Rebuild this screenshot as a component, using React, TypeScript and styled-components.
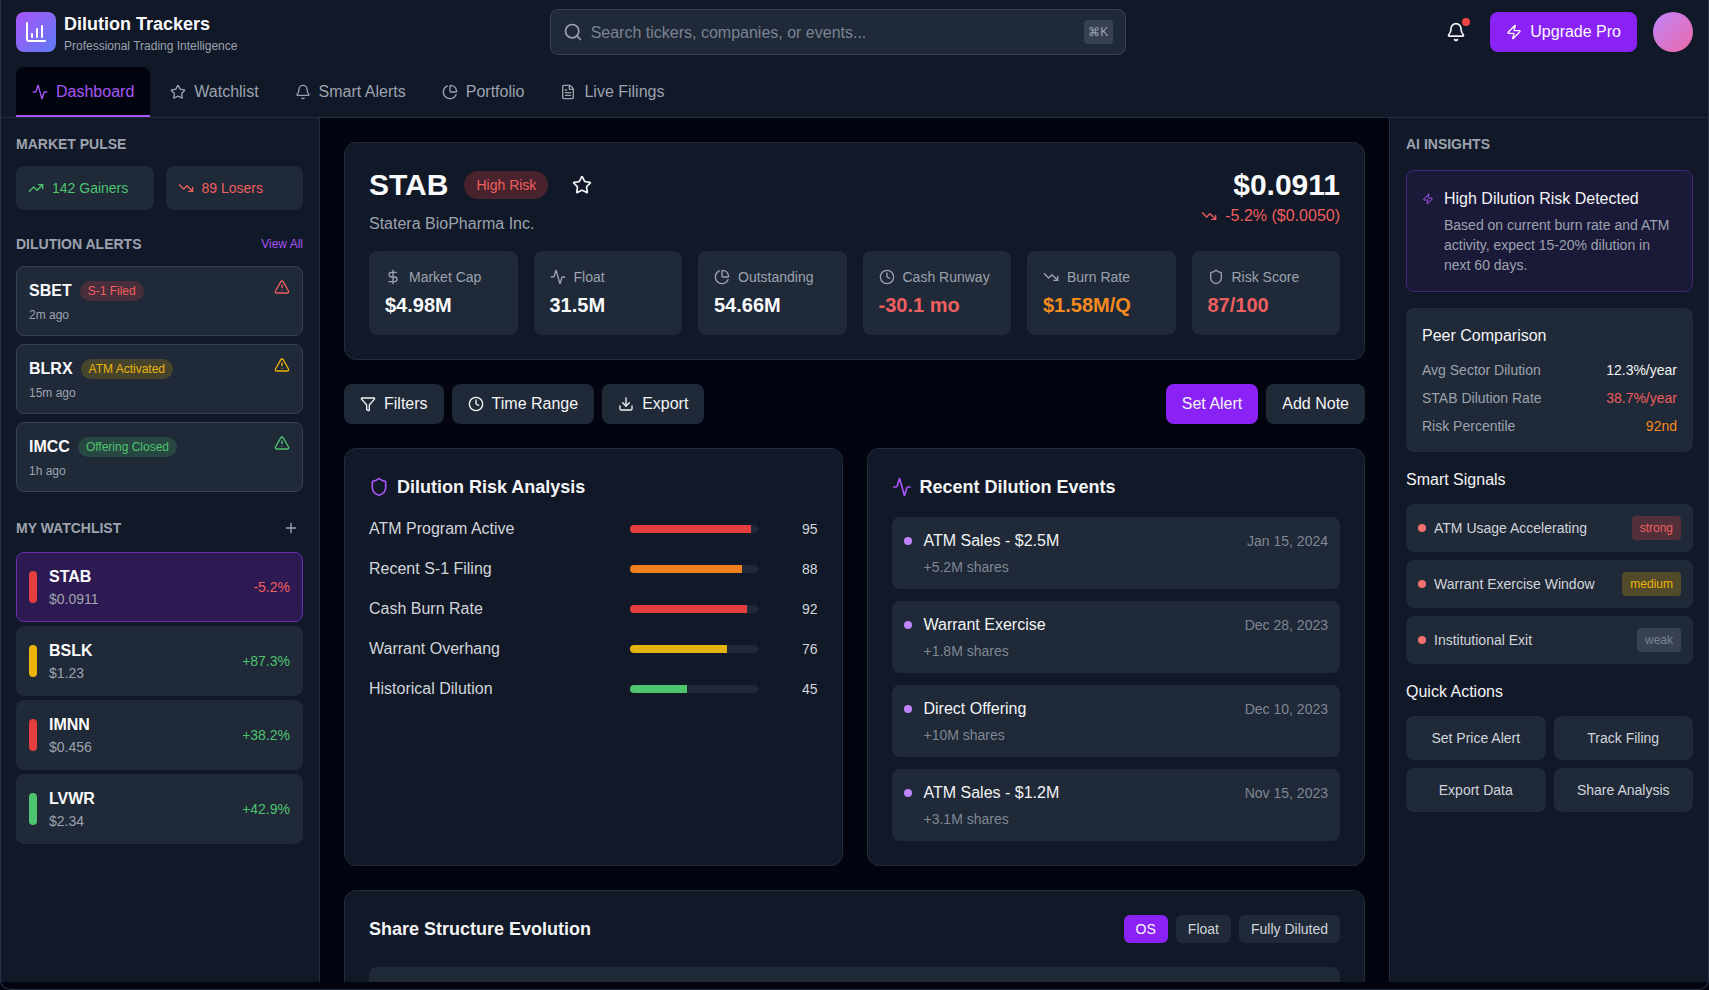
import React from "react";
import styled, { createGlobalStyle } from "styled-components";
import {
  Activity, Star, Bell, PieChart, FileText, TrendingUp, TrendingDown, AlertTriangle, Plus,
  DollarSign, Clock, Shield, Filter, Download, Zap, Search,
} from "lucide-react";

const RED = "#ee5f5f";
const GREEN = "#4ec46e";
const YELLOW = "#eab308";
const ORANGE = "#f58a1f";
const PURPLE = "#a855f7";
const BRAND = "#8b22f5";
const PANEL = "#111827";
const CARD = "#1f2937";
const LINE = "#222c3b";
const MUTED = "#9ca3af";
const INK = "#02050f";

const Global = createGlobalStyle`
  html, body { margin: 0; padding: 0; height: 100%; background: ${INK}; overflow: hidden; }
  * { box-sizing: border-box; }
  body { font-family: "Liberation Sans", Arial, sans-serif; color: #f3f4f6; }
  button { font-family: inherit; }
`;

const Frame = styled.div`
  position: relative;
  width: 1709px;
  height: 990px;
  display: flex;
  flex-direction: column;
  padding-bottom: 8px;
  background: ${INK};
  overflow: hidden;
  &::after {
    content: "";
    position: absolute;
    inset: 0;
    border: 1px solid #2c3543;
    border-top: 0;
    border-radius: 0 0 10px 10px;
    pointer-events: none;
  }
`;

const Header = styled.header`
  flex: none;
  height: 118px;
  background: ${PANEL};
  border-bottom: 1px solid ${LINE};
`;
const TopRow = styled.div`
  height: 64px;
  padding: 0 16px;
  display: flex;
  align-items: center;
  justify-content: space-between;
`;
const Brand = styled.div`
  display: flex;
  align-items: center;
  gap: 8px;
  width: 225px;
`;
const LogoBox = styled.div`
  width: 40px;
  height: 40px;
  border-radius: 8px;
  background: linear-gradient(135deg, #a855f7, #5f7cf6);
  display: flex;
  align-items: center;
  justify-content: center;
`;
const BrandTitle = styled.div`
  font-size: 18px;
  line-height: 28px;
  font-weight: 700;
  color: #f9fafb;
`;
const BrandSub = styled.div`
  font-size: 12px;
  line-height: 16px;
  color: ${MUTED};
`;
const SearchBox = styled.div`
  width: 576px;
  height: 46px;
  margin-left: -4px;
  padding: 0 12px 0 12px;
  display: flex;
  align-items: center;
  gap: 8px;
  background: ${CARD};
  border: 1px solid #374151;
  border-radius: 8px;
  color: ${MUTED};
`;
const SearchText = styled.span`
  flex: 1;
  padding-top: 1px;
  font-size: 16px;
  color: #7b8494;
`;
const Kbd = styled.span`
  width: 29px;
  height: 24px;
  border-radius: 4px;
  background: #374151;
  color: ${MUTED};
  font-size: 12px;
  display: flex;
  align-items: center;
  justify-content: center;
`;
const HeaderRight = styled.div`
  display: flex;
  align-items: center;
  gap: 16px;
`;
const BellButton = styled.div`
  position: relative;
  width: 36px;
  height: 36px;
  display: flex;
  align-items: center;
  justify-content: center;
  color: #f3f4f6;
`;
const BellDot = styled.span`
  position: absolute;
  top: 4px;
  right: 4px;
  width: 8px;
  height: 8px;
  border-radius: 50%;
  background: #ef4444;
`;
const UpgradeButton = styled.button`
  height: 40px;
  padding: 0 16px;
  display: flex;
  align-items: center;
  gap: 8px;
  border: 0;
  border-radius: 8px;
  background: ${BRAND};
  color: #f9fafb;
  font-size: 16px;
`;
const Avatar = styled.div`
  width: 40px;
  height: 40px;
  border-radius: 50%;
  background: linear-gradient(135deg, #c084fc, #ec6aa8);
`;
const Nav = styled.nav`
  height: 53px;
  padding: 3px 16px 0;
  display: flex;
  gap: 4px;
`;
const Tab = styled.div<{ $active?: boolean }>`
  height: 50px;
  padding: 2px 16px 0;
  display: flex;
  align-items: center;
  gap: 8px;
  font-size: 16px;
  border-radius: 8px 8px 0 0;
  color: ${(p) => (p.$active ? PURPLE : MUTED)};
  background: ${(p) => (p.$active ? INK : "transparent")};
  border-bottom: 2px solid ${(p) => (p.$active ? PURPLE : "transparent")};
`;

const Body = styled.div`
  flex: 1;
  min-height: 0;
  display: flex;
`;
const LeftBar = styled.aside`
  flex: none;
  width: 320px;
  padding: 16px;
  background: ${PANEL};
  border-right: 1px solid ${LINE};
`;
const RightBar = styled.aside`
  flex: none;
  width: 320px;
  padding: 16px;
  background: ${PANEL};
  border-left: 1px solid ${LINE};
`;
const Main = styled.main`
  flex: 1;
  min-width: 0;
  padding: 24px;
  overflow: hidden;
`;
const SectionLabel = styled.div`
  font-size: 14px;
  line-height: 20px;
  font-weight: 700;
  color: ${MUTED};
  text-transform: uppercase;
`;
const LabelRow = styled.div<{ $mb: number }>`
  display: flex;
  align-items: center;
  justify-content: space-between;
  margin-bottom: ${(p) => p.$mb}px;
`;
const ViewAll = styled.span`
  font-size: 12px;
  color: ${PURPLE};
`;
const AddButton = styled.div`
  width: 24px;
  height: 24px;
  display: flex;
  align-items: center;
  justify-content: center;
  color: ${MUTED};
`;
const PulseGrid = styled.div`
  display: grid;
  grid-template-columns: 1fr 1fr;
  gap: 12px;
  margin: 12px 0 24px;
`;
const PulseCard = styled.div<{ $color: string }>`
  height: 44px;
  padding: 0 12px;
  display: flex;
  align-items: center;
  gap: 8px;
  border-radius: 8px;
  background: ${CARD};
  color: ${(p) => p.$color};
  font-size: 14px;
`;
const AlertList = styled.div`
  display: flex;
  flex-direction: column;
  gap: 8px;
  margin-bottom: 24px;
`;
const AlertCard = styled.div`
  height: 70px;
  padding: 12px;
  display: flex;
  justify-content: space-between;
  align-items: flex-start;
  border: 1px solid #374151;
  border-radius: 8px;
  background: ${CARD};
`;
const AlertHead = styled.div`
  display: flex;
  align-items: center;
  gap: 8px;
  height: 24px;
`;
const Ticker = styled.span`
  font-size: 16px;
  line-height: 24px;
  font-weight: 700;
  color: #f9fafb;
`;
const AlertBadge = styled.span<{ $color: string; $bg: string }>`
  height: 20px;
  padding: 0 8px;
  display: flex;
  align-items: center;
  border-radius: 10px;
  font-size: 12px;
  color: ${(p) => p.$color};
  background: ${(p) => p.$bg};
`;
const Time = styled.div`
  margin-top: 4px;
  font-size: 12px;
  line-height: 16px;
  color: ${MUTED};
`;
const WatchList = styled.div`
  display: flex;
  flex-direction: column;
  gap: 4px;
`;
const WatchItem = styled.div<{ $active?: boolean }>`
  height: 70px;
  padding: 0 12px;
  display: flex;
  align-items: center;
  gap: 12px;
  border-radius: 8px;
  border: 1px solid ${(p) => (p.$active ? "#6b2fb0" : CARD)};
  background: ${(p) => (p.$active ? "#2e1a52" : CARD)};
`;
const WatchBar = styled.span<{ $color: string }>`
  flex: none;
  width: 8px;
  height: 32px;
  border-radius: 4px;
  background: ${(p) => p.$color};
`;
const WatchText = styled.div`
  flex: 1;
`;
const WatchPrice = styled.div`
  font-size: 14px;
  line-height: 20px;
  color: ${MUTED};
`;
const WatchChange = styled.span<{ $color: string }>`
  font-size: 14px;
  color: ${(p) => p.$color};
`;

const Hero = styled.section`
  height: 218px;
  padding: 24px;
  border: 1px solid ${LINE};
  border-radius: 12px;
  background: ${PANEL};
`;
const HeroTop = styled.div`
  display: flex;
  justify-content: space-between;
  align-items: flex-start;
  height: 68px;
`;
const HeroName = styled.div`
  display: flex;
  align-items: center;
  gap: 16px;
  height: 36px;
`;
const HeroTicker = styled.h1`
  margin: 0;
  font-size: 30px;
  line-height: 36px;
  font-weight: 700;
  color: #f9fafb;
`;
const RiskPill = styled.span`
  height: 28px;
  padding: 0 12px;
  display: flex;
  align-items: center;
  border-radius: 14px;
  font-size: 14px;
  color: ${RED};
  background: rgba(239, 68, 68, 0.25);
`;
const StarIcon = styled.span`
  display: flex;
  margin-left: 8px;
  color: #f3f4f6;
`;
const Company = styled.div`
  margin-top: 9px;
  font-size: 16px;
  line-height: 24px;
  color: ${MUTED};
`;
const PriceBlock = styled.div`
  display: flex;
  flex-direction: column;
  align-items: flex-end;
`;
const Price = styled.div`
  font-size: 30px;
  line-height: 36px;
  font-weight: 700;
  color: #f9fafb;
`;
const PriceChange = styled.div`
  display: flex;
  align-items: center;
  gap: 8px;
  margin-top: 1px;
  font-size: 16px;
  line-height: 24px;
  color: ${RED};
`;
const StatGrid = styled.div`
  margin-top: 16px;
  display: grid;
  grid-template-columns: repeat(6, 1fr);
  gap: 16px;
`;
const StatCard = styled.div`
  height: 84px;
  padding: 16px;
  border-radius: 8px;
  background: ${CARD};
`;
const StatLabel = styled.div`
  display: flex;
  align-items: center;
  gap: 8px;
  font-size: 14px;
  line-height: 20px;
  color: ${MUTED};
`;
const StatValue = styled.div<{ $color?: string }>`
  margin-top: 4px;
  font-size: 20px;
  line-height: 28px;
  font-weight: 700;
  color: ${(p) => p.$color || "#f9fafb"};
`;
const ActionRow = styled.div`
  margin: 24px 0;
  display: flex;
  justify-content: space-between;
`;
const ActionGroup = styled.div`
  display: flex;
  gap: 8px;
`;
const ActionButton = styled.button<{ $primary?: boolean }>`
  height: 40px;
  padding: 0 16px;
  display: flex;
  align-items: center;
  gap: 8px;
  border: 0;
  border-radius: 8px;
  font-size: 16px;
  color: #f3f4f6;
  background: ${(p) => (p.$primary ? BRAND : CARD)};
`;
const TwoCols = styled.div`
  display: grid;
  grid-template-columns: 1fr 1fr;
  gap: 24px;
  margin-bottom: 24px;
`;
const Panel = styled.section`
  padding: 24px;
  border: 1px solid ${LINE};
  border-radius: 12px;
  background: ${PANEL};
`;
const PanelTitle = styled.h2`
  margin: 0 0 16px;
  display: flex;
  align-items: center;
  gap: 8px;
  font-size: 18px;
  line-height: 28px;
  font-weight: 700;
  color: #f3f4f6;
  svg { color: ${PURPLE}; flex: none; }
`;
const RiskList = styled.div`
  display: flex;
  flex-direction: column;
  gap: 16px;
`;
const RiskRow = styled.div`
  display: flex;
  align-items: center;
  height: 24px;
`;
const RiskLabel = styled.span`
  flex: 1;
  font-size: 16px;
  color: #d1d5db;
`;
const Track = styled.div`
  width: 128px;
  height: 8px;
  border-radius: 4px;
  background: ${CARD};
  overflow: hidden;
`;
const Fill = styled.div<{ $color: string }>`
  height: 100%;
  background: ${(p) => p.$color};
`;
const RiskValue = styled.span`
  width: 60px;
  text-align: right;
  font-size: 14px;
  color: #d1d5db;
`;
const EventList = styled.div`
  display: flex;
  flex-direction: column;
  gap: 12px;
`;
const EventCard = styled.div`
  height: 72px;
  padding: 12px;
  display: flex;
  gap: 12px;
  border-radius: 8px;
  background: ${CARD};
`;
const EventDot = styled.span`
  flex: none;
  width: 8px;
  height: 8px;
  margin-top: 8px;
  border-radius: 50%;
  background: #c084fc;
`;
const EventText = styled.div`
  flex: 1;
`;
const EventTitle = styled.div`
  font-size: 16px;
  line-height: 24px;
  color: #f3f4f6;
`;
const EventSub = styled.div`
  margin-top: 4px;
  font-size: 14px;
  line-height: 20px;
  color: #7f8794;
`;
const EventDate = styled.span`
  font-size: 14px;
  line-height: 24px;
  color: #7f8794;
`;
const ChartHead = styled.div`
  display: flex;
  align-items: center;
  justify-content: space-between;
  height: 28px;
  margin-bottom: 24px;
`;
const ChartTitle = styled.h2`
  margin: 0;
  font-size: 18px;
  line-height: 28px;
  font-weight: 700;
  color: #f3f4f6;
`;
const ChartToggles = styled.div`
  display: flex;
  gap: 8px;
`;
const Toggle = styled.button<{ $active?: boolean }>`
  height: 28px;
  padding: 0 12px;
  border: 0;
  border-radius: 6px;
  font-size: 14px;
  color: ${(p) => (p.$active ? "#f9fafb" : "#d1d5db")};
  background: ${(p) => (p.$active ? BRAND : CARD)};
`;
const ChartArea = styled.div`
  height: 256px;
  border-radius: 8px;
  background: ${CARD};
`;

const InsightCard = styled.div`
  height: 122px;
  margin: 16px 0;
  padding: 16px;
  display: flex;
  gap: 9px;
  border: 1px solid #41277a;
  border-radius: 8px;
  background: #1a1938;
`;
const InsightIcon = styled.span`
  flex: none;
  display: flex;
  height: 24px;
  align-items: center;
  margin-left: -1px;
  color: ${PURPLE};
`;
const InsightBody = styled.div`
  margin-left: 1px;
`;
const InsightTitle = styled.div`
  font-size: 16px;
  line-height: 24px;
  color: #f3f4f6;
`;
const InsightText = styled.div`
  margin-top: 4px;
  font-size: 14px;
  line-height: 20px;
  color: ${MUTED};
`;
const PeerCard = styled.div`
  padding: 16px;
  border-radius: 8px;
  background: ${CARD};
  margin-bottom: 16px;
`;
const SubTitle = styled.div`
  margin-bottom: 12px;
  font-size: 16px;
  line-height: 24px;
  color: #f3f4f6;
`;
const PeerRows = styled.div`
  display: flex;
  flex-direction: column;
  gap: 8px;
`;
const PeerRow = styled.div`
  display: flex;
  justify-content: space-between;
  font-size: 14px;
  line-height: 20px;
  color: ${MUTED};
`;
const PeerValue = styled.span<{ $color: string }>`
  color: ${(p) => p.$color};
`;
const SignalList = styled.div`
  display: flex;
  flex-direction: column;
  gap: 8px;
  margin-bottom: 16px;
`;
const SignalRow = styled.div`
  height: 48px;
  padding: 0 12px;
  display: flex;
  align-items: center;
  gap: 8px;
  border-radius: 8px;
  background: ${CARD};
`;
const SignalDot = styled.span`
  flex: none;
  width: 8px;
  height: 8px;
  border-radius: 50%;
  background: #f87171;
`;
const SignalText = styled.span`
  flex: 1;
  font-size: 14px;
  color: #d1d5db;
`;
const SignalBadge = styled.span<{ $color: string; $bg: string }>`
  height: 24px;
  padding: 0 8px;
  display: flex;
  align-items: center;
  border-radius: 4px;
  font-size: 12px;
  color: ${(p) => p.$color};
  background: ${(p) => p.$bg};
`;
const QuickGrid = styled.div`
  display: grid;
  grid-template-columns: 1fr 1fr;
  gap: 8px;
`;
const QuickButton = styled.button`
  height: 44px;
  border: 0;
  border-radius: 8px;
  background: ${CARD};
  color: #d1d5db;
  font-size: 14px;
`;

const tabs = [
  { label: "Dashboard", Icon: Activity, active: true },
  { label: "Watchlist", Icon: Star },
  { label: "Smart Alerts", Icon: Bell },
  { label: "Portfolio", Icon: PieChart },
  { label: "Live Filings", Icon: FileText },
];
const alerts = [
  { t: "SBET", b: "S-1 Filed", c: RED, bg: "rgba(239,68,68,0.2)", time: "2m ago" },
  { t: "BLRX", b: "ATM Activated", c: YELLOW, bg: "rgba(234,179,8,0.2)", time: "15m ago" },
  { t: "IMCC", b: "Offering Closed", c: GREEN, bg: "rgba(78,196,110,0.2)", time: "1h ago" },
];
const watch = [
  { t: "STAB", p: "$0.0911", ch: "-5.2%", bar: "#e53e3e", col: RED, active: true },
  { t: "BSLK", p: "$1.23", ch: "+87.3%", bar: "#eab308", col: GREEN },
  { t: "IMNN", p: "$0.456", ch: "+38.2%", bar: "#e53e3e", col: GREEN },
  { t: "LVWR", p: "$2.34", ch: "+42.9%", bar: "#4ec46e", col: GREEN },
];
const stats = [
  { l: "Market Cap", v: "$4.98M", Icon: DollarSign },
  { l: "Float", v: "31.5M", Icon: Activity },
  { l: "Outstanding", v: "54.66M", Icon: PieChart },
  { l: "Cash Runway", v: "-30.1 mo", Icon: Clock, c: RED },
  { l: "Burn Rate", v: "$1.58M/Q", Icon: TrendingDown, c: ORANGE },
  { l: "Risk Score", v: "87/100", Icon: Shield, c: RED },
];
const risks = [
  { l: "ATM Program Active", v: 95, c: "#e53e3e" },
  { l: "Recent S-1 Filing", v: 88, c: "#f07f1e" },
  { l: "Cash Burn Rate", v: 92, c: "#e53e3e" },
  { l: "Warrant Overhang", v: 76, c: "#e6b20f" },
  { l: "Historical Dilution", v: 45, c: "#4ec46e" },
];
const events = [
  { t: "ATM Sales - $2.5M", s: "+5.2M shares", d: "Jan 15, 2024" },
  { t: "Warrant Exercise", s: "+1.8M shares", d: "Dec 28, 2023" },
  { t: "Direct Offering", s: "+10M shares", d: "Dec 10, 2023" },
  { t: "ATM Sales - $1.2M", s: "+3.1M shares", d: "Nov 15, 2023" },
];
const peers = [
  { l: "Avg Sector Dilution", v: "12.3%/year", c: "#f3f4f6" },
  { l: "STAB Dilution Rate", v: "38.7%/year", c: RED },
  { l: "Risk Percentile", v: "92nd", c: ORANGE },
];
const signals = [
  { l: "ATM Usage Accelerating", b: "strong", c: RED, bg: "rgba(239,68,68,0.25)" },
  { l: "Warrant Exercise Window", b: "medium", c: YELLOW, bg: "rgba(234,179,8,0.25)" },
  { l: "Institutional Exit", b: "weak", c: "#7b8494", bg: "#374151" },
];
const quick = ["Set Price Alert", "Track Filing", "Export Data", "Share Analysis"];

function LogoGlyph() {
  return (
    <svg width="24" height="24" viewBox="0 0 24 24" fill="none" stroke="#fff" strokeWidth="2" strokeLinecap="round" strokeLinejoin="round">
      <path d="M3 3v16a2 2 0 0 0 2 2h16" />
      <path d="M8 17v-3" />
      <path d="M13 17V9" />
      <path d="M18 17V6" />
    </svg>
  );
}

export default function App() {
  return (
    <Frame>
      <Global />
      <Header>
        <TopRow>
          <Brand>
            <LogoBox><LogoGlyph /></LogoBox>
            <div>
              <BrandTitle>Dilution Trackers</BrandTitle>
              <BrandSub>Professional Trading Intelligence</BrandSub>
            </div>
          </Brand>
          <SearchBox>
            <Search size={20} />
            <SearchText>Search tickers, companies, or events...</SearchText>
            <Kbd>⌘K</Kbd>
          </SearchBox>
          <HeaderRight>
            <BellButton>
              <Bell size={20} />
              <BellDot />
            </BellButton>
            <UpgradeButton><Zap size={16} />Upgrade Pro</UpgradeButton>
            <Avatar />
          </HeaderRight>
        </TopRow>
        <Nav>
          {tabs.map(({ label, Icon, active }) => (
            <Tab key={label} $active={active}><Icon size={16} />{label}</Tab>
          ))}
        </Nav>
      </Header>
      <Body>
        <LeftBar>
          <SectionLabel>Market Pulse</SectionLabel>
          <PulseGrid>
            <PulseCard $color={GREEN}><TrendingUp size={16} />142 Gainers</PulseCard>
            <PulseCard $color={RED}><TrendingDown size={16} />89 Losers</PulseCard>
          </PulseGrid>
          <LabelRow $mb={12}>
            <SectionLabel>Dilution Alerts</SectionLabel>
            <ViewAll>View All</ViewAll>
          </LabelRow>
          <AlertList>
            {alerts.map((a) => (
              <AlertCard key={a.t}>
                <div>
                  <AlertHead>
                    <Ticker>{a.t}</Ticker>
                    <AlertBadge $color={a.c} $bg={a.bg}>{a.b}</AlertBadge>
                  </AlertHead>
                  <Time>{a.time}</Time>
                </div>
                <AlertTriangle size={16} color={a.c} />
              </AlertCard>
            ))}
          </AlertList>
          <LabelRow $mb={12}>
            <SectionLabel>My Watchlist</SectionLabel>
            <AddButton><Plus size={16} /></AddButton>
          </LabelRow>
          <WatchList>
            {watch.map((w) => (
              <WatchItem key={w.t} $active={w.active}>
                <WatchBar $color={w.bar} />
                <WatchText>
                  <Ticker>{w.t}</Ticker>
                  <WatchPrice>{w.p}</WatchPrice>
                </WatchText>
                <WatchChange $color={w.col}>{w.ch}</WatchChange>
              </WatchItem>
            ))}
          </WatchList>
        </LeftBar>
        <Main>
          <Hero>
            <HeroTop>
              <div>
                <HeroName>
                  <HeroTicker>STAB</HeroTicker>
                  <RiskPill>High Risk</RiskPill>
                  <StarIcon><Star size={20} /></StarIcon>
                </HeroName>
                <Company>Statera BioPharma Inc.</Company>
              </div>
              <PriceBlock>
                <Price>$0.0911</Price>
                <PriceChange><TrendingDown size={16} />-5.2% ($0.0050)</PriceChange>
              </PriceBlock>
            </HeroTop>
            <StatGrid>
              {stats.map(({ l, v, Icon, c }) => (
                <StatCard key={l}>
                  <StatLabel><Icon size={16} />{l}</StatLabel>
                  <StatValue $color={c}>{v}</StatValue>
                </StatCard>
              ))}
            </StatGrid>
          </Hero>
          <ActionRow>
            <ActionGroup>
              <ActionButton><Filter size={16} />Filters</ActionButton>
              <ActionButton><Clock size={16} />Time Range</ActionButton>
              <ActionButton><Download size={16} />Export</ActionButton>
            </ActionGroup>
            <ActionGroup>
              <ActionButton $primary>Set Alert</ActionButton>
              <ActionButton>Add Note</ActionButton>
            </ActionGroup>
          </ActionRow>
          <TwoCols>
            <Panel>
              <PanelTitle><Shield size={20} />Dilution Risk Analysis</PanelTitle>
              <RiskList>
                {risks.map((r) => (
                  <RiskRow key={r.l}>
                    <RiskLabel>{r.l}</RiskLabel>
                    <Track><Fill $color={r.c} style={{ width: `${r.v}%` }} /></Track>
                    <RiskValue>{r.v}</RiskValue>
                  </RiskRow>
                ))}
              </RiskList>
            </Panel>
            <Panel>
              <PanelTitle><Activity size={20} />Recent Dilution Events</PanelTitle>
              <EventList>
                {events.map((e) => (
                  <EventCard key={e.t}>
                    <EventDot />
                    <EventText>
                      <EventTitle>{e.t}</EventTitle>
                      <EventSub>{e.s}</EventSub>
                    </EventText>
                    <EventDate>{e.d}</EventDate>
                  </EventCard>
                ))}
              </EventList>
            </Panel>
          </TwoCols>
          <Panel>
            <ChartHead>
              <ChartTitle>Share Structure Evolution</ChartTitle>
              <ChartToggles>
                <Toggle $active>OS</Toggle>
                <Toggle>Float</Toggle>
                <Toggle>Fully Diluted</Toggle>
              </ChartToggles>
            </ChartHead>
            <ChartArea />
          </Panel>
        </Main>
        <RightBar>
          <SectionLabel>AI Insights</SectionLabel>
          <InsightCard>
            <InsightIcon><Zap size={12} /></InsightIcon>
            <InsightBody>
              <InsightTitle>High Dilution Risk Detected</InsightTitle>
              <InsightText>Based on current burn rate and ATM activity, expect 15-20% dilution in next 60 days.</InsightText>
            </InsightBody>
          </InsightCard>
          <PeerCard>
            <SubTitle>Peer Comparison</SubTitle>
            <PeerRows>
              {peers.map((p) => (
                <PeerRow key={p.l}>
                  <span>{p.l}</span>
                  <PeerValue $color={p.c}>{p.v}</PeerValue>
                </PeerRow>
              ))}
            </PeerRows>
          </PeerCard>
          <SubTitle>Smart Signals</SubTitle>
          <SignalList>
            {signals.map((s) => (
              <SignalRow key={s.l}>
                <SignalDot />
                <SignalText>{s.l}</SignalText>
                <SignalBadge $color={s.c} $bg={s.bg}>{s.b}</SignalBadge>
              </SignalRow>
            ))}
          </SignalList>
          <SubTitle>Quick Actions</SubTitle>
          <QuickGrid>
            {quick.map((q) => <QuickButton key={q}>{q}</QuickButton>)}
          </QuickGrid>
        </RightBar>
      </Body>
    </Frame>
  );
}
